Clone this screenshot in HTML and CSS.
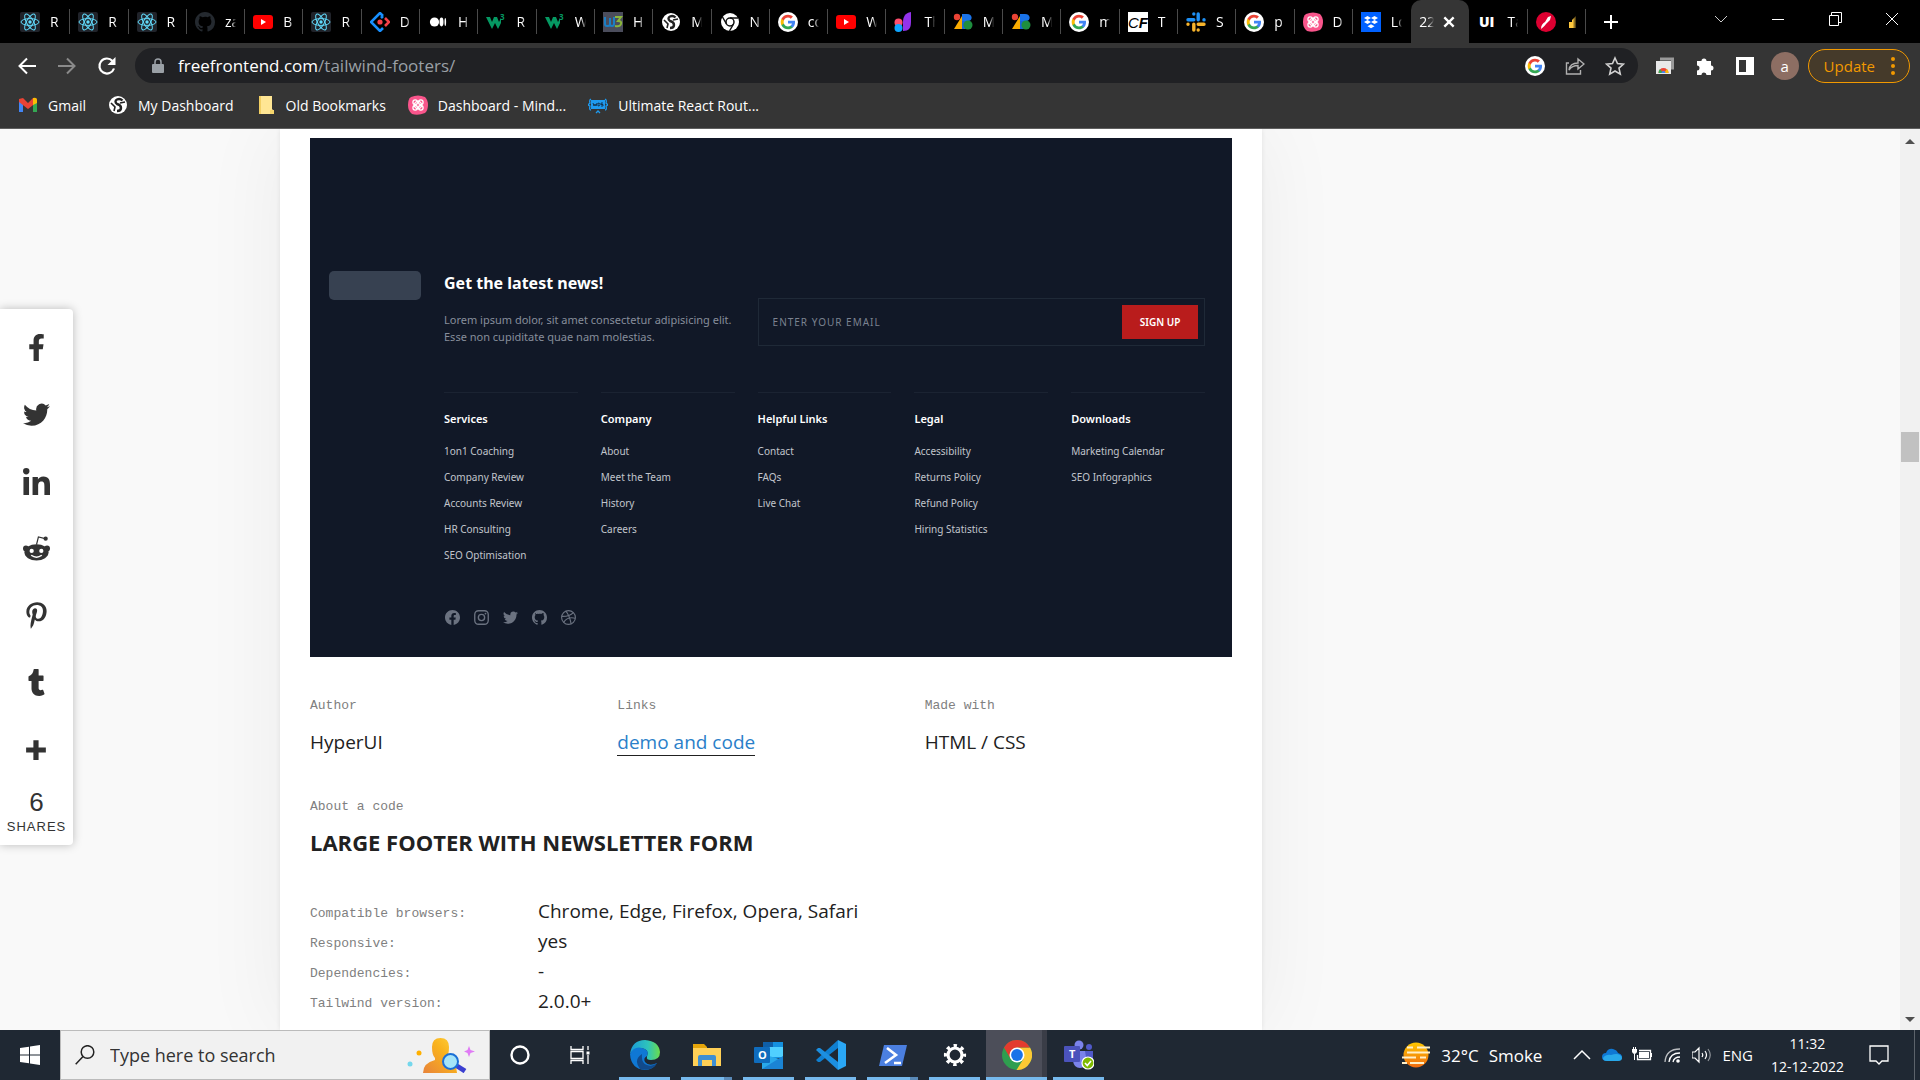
FILE: index.html
```html
<!DOCTYPE html>
<html lang="en">
<head>
<meta charset="utf-8">
<meta name="viewport" content="width=device-width, initial-scale=1">
<title>22 Tailwind Footers</title>
<link rel="stylesheet" href="styles.css">
</head>
<body>
<svg class="sprite" aria-hidden="true">
  <symbol id="react" viewBox="0 0 20 20"><rect width="20" height="20" rx="2" fill="#20232a"/><g fill="none" stroke="#61dafb" stroke-width="1"><ellipse cx="10" cy="10" rx="9" ry="3.4"/><ellipse cx="10" cy="10" rx="9" ry="3.4" transform="rotate(60 10 10)"/><ellipse cx="10" cy="10" rx="9" ry="3.4" transform="rotate(120 10 10)"/></g><circle cx="10" cy="10" r="1.7" fill="#61dafb"/></symbol>
  <symbol id="github" viewBox="2 2 20 20"><path fill="currentColor" d="M12 2C6.477 2 2 6.484 2 12.017c0 4.425 2.865 8.18 6.839 9.504.5.092.682-.217.682-.483 0-.237-.008-.868-.013-1.703-2.782.605-3.369-1.343-3.369-1.343-.454-1.158-1.11-1.466-1.11-1.466-.908-.62.069-.608.069-.608 1.003.07 1.531 1.032 1.531 1.032.892 1.53 2.341 1.088 2.91.832.092-.647.35-1.088.636-1.338-2.22-.253-4.555-1.113-4.555-4.951 0-1.093.39-1.988 1.029-2.688-.103-.253-.446-1.272.098-2.65 0 0 .84-.27 2.75 1.026A9.564 9.564 0 0112 6.844c.85.004 1.705.115 2.504.337 1.909-1.296 2.747-1.027 2.747-1.027.546 1.379.202 2.398.1 2.651.64.7 1.028 1.595 1.028 2.688 0 3.848-2.339 4.695-4.566 4.943.359.309.678.92.678 1.855 0 1.338-.012 2.419-.012 2.747 0 .268.18.58.688.482A10.019 10.019 0 0022 12.017C22 6.484 17.522 2 12 2z"/></symbol>
  <symbol id="youtube" viewBox="0 0 20 20"><rect y="3" width="20" height="14" rx="3" fill="#f00"/><path d="M8 7v6l5-3z" fill="#fff"/></symbol>
  <symbol id="antd" viewBox="0 0 20 20"><path d="M13 4l-3-3-9 9 9 9 3-3M13 4l-2 2" fill="none" stroke="#1890ff" stroke-width="2.6"/><path d="M15 6l4 4-4 4" fill="none" stroke="#f5414a" stroke-width="2.6"/><circle cx="10" cy="10" r="2.6" fill="#f5414a"/></symbol>
  <symbol id="medium" viewBox="0 0 20 20"><g fill="#fff"><circle cx="6.500" cy="10" r="4.600"/><ellipse cx="13.500" cy="10" rx="2" ry="4.400"/><ellipse cx="17.300" cy="10" rx=".8" ry="4"/></g></symbol>
  <symbol id="w3docs" viewBox="0 0 20 20"><rect width="20" height="20" fill="#4b4d5c"/><path d="M2 5v7q0 2 2 2h1q2 0 2-2V6v6q0 2 2 2h0q2 0 2-2V5" fill="none" stroke="#1c7fc4" stroke-width="2"/><path d="M12 5h6l-3 4q4 0 3 3t-6 2" fill="none" stroke="#8bb73b" stroke-width="2"/></symbol>
  <symbol id="globe" viewBox="0 0 20 20"><circle cx="10" cy="10" r="9" fill="#fff"/><path d="M14.500 5.500Q12 3 9 4.500T9 9q4 1 4 4t-4 3" fill="none" stroke="#222" stroke-width="2.400"/><path d="M3 8l4 4-1 4M12 8l5-1" fill="none" stroke="#222" stroke-width="1.600"/></symbol>
  <symbol id="chromemono" viewBox="0 0 20 20"><circle cx="10" cy="10" r="9" fill="#fff"/><circle cx="10" cy="10" r="4" fill="none" stroke="#111" stroke-width="1.500"/><path d="M10 6h8M6.500 12L2.500 5M13.500 12l-4 7" stroke="#111" stroke-width="1.500"/></symbol>
  <symbol id="google" viewBox="-3 -3 30 30"><circle cx="12" cy="12" r="15" fill="#fff"/><path fill="#4285f4" d="M22.560 12.250c0-.78-.07-1.530-.2-2.250H12v4.260h5.920c-.26 1.370-1.040 2.530-2.210 3.310v2.770h3.570c2.080-1.920 3.280-4.740 3.280-8.090z"/><path fill="#34a853" d="M12 23c2.970 0 5.460-.98 7.280-2.660l-3.570-2.770c-.98.66-2.230 1.060-3.710 1.060-2.860 0-5.290-1.930-6.160-4.530H2.180v2.840C3.990 20.530 7.700 23 12 23z"/><path fill="#fbbc05" d="M5.840 14.090c-.22-.66-.35-1.360-.35-2.090s.13-1.430.35-2.090V7.070H2.180C1.430 8.550 1 10.220 1 12s.43 3.450 1.180 4.930l3.660-2.840z"/><path fill="#ea4335" d="M12 5.380c1.620 0 3.060.56 4.210 1.640l3.150-3.150C17.450 2.090 14.970 1 12 1 7.700 1 3.990 3.470 2.180 7.070l3.660 2.840c.87-2.600 3.300-4.530 6.160-4.530z"/></symbol>
  <symbol id="themes" viewBox="0 0 20 20"><path d="M17 0c-6 1-8 5-8 10s0 6 0 9c6 0 8-3 8-9z" fill="#9333ea"/><circle cx="4.500" cy="10.500" r="4" fill="#ff4d6d"/><circle cx="4.500" cy="16" r="4" fill="#0ea5ff"/></symbol>
  <symbol id="bootstrap" viewBox="0 0 20 20"><circle cx="4" cy="5" r="3.200" fill="#ea4335"/><path d="M1 17L9 4v13z" fill="#f9ab00"/><path d="M9 2h5c6 0 6 7 1 7H9z" fill="#1a73e8"/><path d="M9 9h4v8H9z" fill="#1967d2"/><circle cx="15" cy="13" r="4.500" fill="#1e8e3e"/></symbol>
  <symbol id="slack" viewBox="0 0 20 20"><g fill="none" stroke-width="3.400" stroke-linecap="round"><path d="M7.800 2v.1M2 7.800h5.800M12.200 2v5.800M18 7.800v.1" stroke="#1e90f5"/><path d="M2 12.200v.1M7.800 12.200V18M12.200 12.200H18M12.200 18v.1" stroke="#f5b32c"/></g></symbol>
  <symbol id="mind" viewBox="0 0 20 20"><path d="M3 2Q10-1 17 2q3 3 3 8t-3 8q-7 3-13 1Q0 16 0 10T3 2z" fill="#f9558b"/><g fill="none" stroke="#fff" stroke-width="1.300"><circle cx="7.200" cy="7.200" r="2.300"/><circle cx="12.800" cy="7.200" r="2.300"/><circle cx="7.200" cy="12.800" r="2.300"/><circle cx="12.800" cy="12.800" r="2.300"/><circle cx="10" cy="10" r="3.600"/></g></symbol>
  <symbol id="dropbox" viewBox="0 0 20 20"><rect width="20" height="20" fill="#0061ff"/><path d="M6.500 4l3.500 2-3.500 2L3 6zM13.500 4L17 6l-3.500 2L10 6zM6.500 8l3.500 2-3.500 2L3 10zM13.500 8l3.500 2-3.500 2-3.500-2zM10 12.200l3.500 2-3.500 2-3.500-2z" fill="#fff"/></symbol>
  <symbol id="redbrush" viewBox="0 0 20 20"><circle cx="10" cy="10" r="10" fill="#dd0031"/><path d="M5 17c0-4 2-6 4-7l3-5 3-1-1 4-4 4c-1 2-3 3-5 5z" fill="#fff"/></symbol>
  <symbol id="gmail" viewBox="0 0 20 20"><path d="M1 17V4h4v13z" fill="#4285f4"/><path d="M15 17V4h4v13z" fill="#34a853"/><path d="M1 4l4-1 5 5 5-5 4 1v3l-9 7-9-7z" fill="#ea4335"/><path d="M15 3q4-1 4 2v3l-4 2z" fill="#fbbc04"/></symbol>
  <symbol id="folder" viewBox="0 0 20 20"><path d="M3 1h13v13l2 2v3H3z" fill="#ffe694"/><path d="M3 1h2v18H3z" fill="#f2cf63"/><path d="M14 15h4v4h-4z" fill="#f5d56c"/></symbol>
  <symbol id="wds" viewBox="0 0 20 20"><path d="M3 5h14v9H3z" fill="#1e9bf0"/><path d="M3 4q-2 1-1 4l-2 2 2 1q-1 4 1 4M17 4q2 1 1 4l2 2-2 1q1 4-1 4M8 18l2-2 2 2" fill="none" stroke="#1e9bf0" stroke-width="1.300"/><path d="M5 8l1 3 1-2 1 2 1-3M10 8v3q2 0 2-1.500T10 8M15 8h-2v1.500h2V11h-2" fill="none" stroke="#123" stroke-width=".8"/></symbol>
  <symbol id="twitter" viewBox="2 2 20 20"><path fill="currentColor" d="M8.290 20.251c7.547 0 11.675-6.253 11.675-11.675 0-.178 0-.355-.012-.53A8.348 8.348 0 0022 5.920a8.190 8.190 0 01-2.357.646 4.118 4.118 0 001.804-2.270 8.224 8.224 0 01-2.605.996 4.107 4.107 0 00-6.993 3.743 11.650 11.650 0 01-8.457-4.287 4.106 4.106 0 001.270 5.477A4.072 4.072 0 012.800 9.713v.052a4.105 4.105 0 003.292 4.022 4.095 4.095 0 01-1.853.07 4.108 4.108 0 003.834 2.850A8.233 8.233 0 012 18.407a11.616 11.616 0 006.290 1.840"/></symbol>
</svg>

<header class="browser">
  <div class="titlebar">
    <nav class="tabs" aria-label="Tabs">
      <a class="tab" href="#"><svg><use href="#react"/></svg><span>R</span></a>
      <a class="tab" href="#"><svg><use href="#react"/></svg><span>R</span></a>
      <a class="tab" href="#"><svg><use href="#react"/></svg><span>R</span></a>
      <a class="tab tab-dim" href="#"><svg><use href="#github"/></svg><span>za</span></a>
      <a class="tab" href="#"><svg><use href="#youtube"/></svg><span>B</span></a>
      <a class="tab" href="#"><svg><use href="#react"/></svg><span>R</span></a>
      <a class="tab" href="#"><svg><use href="#antd"/></svg><span>D</span></a>
      <a class="tab" href="#"><svg><use href="#medium"/></svg><span>H</span></a>
      <a class="tab" href="#"><svg viewBox="0 0 20 20"><path d="M0 5h4l2 5 2-5h3l2 5 2-4v5l-3 6-3-6-3 6z" fill="#059862"/><text x="14" y="8" font-size="8" font-weight="700" fill="#059862">3</text></svg><span>R</span></a>
      <a class="tab" href="#"><svg viewBox="0 0 20 20"><path d="M0 5h4l2 5 2-5h3l2 5 2-4v5l-3 6-3-6-3 6z" fill="#059862"/><text x="14" y="8" font-size="8" font-weight="700" fill="#059862">3</text></svg><span>W</span></a>
      <a class="tab" href="#"><svg><use href="#w3docs"/></svg><span>H</span></a>
      <a class="tab" href="#"><svg><use href="#globe"/></svg><span>M</span></a>
      <a class="tab" href="#"><svg><use href="#chromemono"/></svg><span>N</span></a>
      <a class="tab" href="#"><svg><use href="#google"/></svg><span>co</span></a>
      <a class="tab" href="#"><svg><use href="#youtube"/></svg><span>W</span></a>
      <a class="tab" href="#"><svg><use href="#themes"/></svg><span>Th</span></a>
      <a class="tab" href="#"><svg><use href="#bootstrap"/></svg><span>M</span></a>
      <a class="tab" href="#"><svg><use href="#bootstrap"/></svg><span>M</span></a>
      <a class="tab" href="#"><svg><use href="#google"/></svg><span>m</span></a>
      <a class="tab" href="#"><svg class="cf" viewBox="0 0 20 20"><rect width="20" height="20" fill="#fff"/><text x="0" y="16" font-size="15" font-style="italic">C<tspan font-weight="700">F</tspan></text></svg><span>T</span></a>
      <a class="tab" href="#"><svg><use href="#slack"/></svg><span>S</span></a>
      <a class="tab" href="#"><svg><use href="#google"/></svg><span>p</span></a>
      <a class="tab" href="#"><svg><use href="#mind"/></svg><span>D</span></a>
      <a class="tab tab-last" href="#"><svg><use href="#dropbox"/></svg><span>Lo</span></a>
      <div class="tab tab-active"><span>22</span><button aria-label="Close tab"><svg viewBox="0 0 12 12"><path d="M2 2l8 8M10 2l-8 8" stroke="#fff" stroke-width="2"/></svg></button></div>
      <a class="tab" href="#"><svg viewBox="0 0 20 20"><text x="2" y="15" font-size="14" font-weight="800" fill="#fff">UI</text></svg><span>Ta</span></a>
      <a class="tab" href="#"><svg><use href="#redbrush"/></svg><span><svg viewBox="0 0 10 20"><path d="M3 10h3V8l4-4v12H3z" fill="#ffc83d"/></svg></span></a>
    </nav>
    <button class="new-tab" aria-label="New tab"><svg viewBox="0 0 16 16"><path d="M8 1v14M1 8h14" stroke="#fff" stroke-width="2"/></svg></button>
    <div class="window-controls">
      <button aria-label="Search tabs"><svg viewBox="0 0 14 14"><path d="M1 4l6 6 6-6" fill="none" stroke="#ccc"/></svg></button>
      <button aria-label="Minimise"><svg viewBox="0 0 14 14"><path d="M1 7.500h12" stroke="#fff"/></svg></button>
      <button aria-label="Restore"><svg viewBox="0 0 14 14"><path d="M1.500 3.500h9v10h-9zM3.500 3V.5h10v10H11" fill="none" stroke="#fff"/></svg></button>
      <button aria-label="Close"><svg viewBox="0 0 14 14"><path d="M1 1l12 12M13 1L1 13" stroke="#fff"/></svg></button>
    </div>
  </div>

  <div class="toolbar">
    <button class="nav-btn" aria-label="Back"><svg viewBox="0 0 20 20"><path d="M19 10H3M10 2.500L2.500 10l7.500 7.500" fill="none" stroke="#fff" stroke-width="2"/></svg></button>
    <button class="nav-btn" aria-label="Forward"><svg viewBox="0 0 20 20"><path d="M1 10h16M10 2.500l7.500 7.500-7.500 7.500" fill="none" stroke="#8a8a8a" stroke-width="2"/></svg></button>
    <button class="nav-btn" aria-label="Reload"><svg viewBox="0 0 20 20"><path d="M17 12.500A7.500 7.500 0 1 1 15.500 5" fill="none" stroke="#fff" stroke-width="2.200"/><path d="M18.500 1v8h-8z" fill="#fff"/></svg></button>
    <div class="omnibox">
      <svg class="lock" viewBox="0 0 12 16"><rect x="0" y="6" width="12" height="9" rx="1" fill="#9aa0a6"/><path d="M3 7V4a3 3 0 0 1 6 0v3" fill="none" stroke="#9aa0a6" stroke-width="1.500"/></svg>
      <p class="url">freefrontend.com<span>/tailwind-footers/</span></p>
      <svg class="ico"><use href="#google"/></svg>
      <svg class="ico" viewBox="0 0 20 20"><path d="M4 7H1.500v11h14v-4M4 14q1-7 9-7V3l6 5-6 5V9.500Q7 9.500 4 14z" fill="none" stroke="#b0b0b0" stroke-width="1.400"/></svg>
      <svg class="ico" viewBox="0 0 20 20"><path d="M10 2l2.500 5.500 6 .6-4.500 4 1.300 6L10 15l-5.300 3.100 1.300-6-4.500-4 6-.6z" fill="none" stroke="#d0d0d0" stroke-width="1.600"/></svg>
    </div>
    <div class="extensions">
      <svg class="ico" viewBox="0 0 20 20"><path d="M5 1.500h14v12h-3V4.500H5z" fill="#9a9a9a"/><path d="M1 5h15v13H1z" fill="#e8e8e8"/><path d="M3.500 17a5 5 0 0 1 10 0z" fill="#ea4335"/><path d="M3.500 17q0-2.500 1.500-4l3 4z" fill="#34a853"/><path d="M13.500 17q0-2.500-1.500-4l-3 4z" fill="#fbbc05"/><path d="M6.500 17a2 2 0 0 1 4 0z" fill="#4285f4"/></svg>
      <svg class="ico" viewBox="0 0 20 20"><path d="M2 5h4.500a2.500 2.500 0 1 1 5 0H16v4.500a2.500 2.500 0 1 1 0 5V19h-4.500a2.500 2.500 0 0 0-5 0H2v-4.500a2.500 2.500 0 0 0 0-5z" fill="#fff"/></svg>
      <svg class="ico" viewBox="0 0 20 20"><path d="M1 1h18v18H1zM4 4v12h7V4z" fill="#fff" fill-rule="evenodd"/></svg>
      <button class="avatar" aria-label="Profile">a</button>
      <button class="update">Update <svg viewBox="0 0 4 18"><g fill="#f29900"><circle cx="2" cy="2" r="2"/><circle cx="2" cy="9" r="2"/><circle cx="2" cy="16" r="2"/></g></svg></button>
    </div>
  </div>

  <nav class="bookmarks" aria-label="Bookmarks">
    <a href="#"><svg><use href="#gmail"/></svg>Gmail</a>
    <a href="#"><svg><use href="#globe"/></svg>My Dashboard</a>
    <a href="#"><svg><use href="#folder"/></svg>Old Bookmarks</a>
    <a href="#"><svg><use href="#mind"/></svg>Dashboard - Mind...</a>
    <a href="#"><svg><use href="#wds"/></svg>Ultimate React Rout...</a>
  </nav>
</header>

<div class="viewport">
  <main class="page">
    <article class="card">
      <section class="preview">
        <div class="brand"></div>
        <div class="preview-body">
          <div class="news">
            <div class="news-copy">
              <h3>Get the latest news!</h3>
              <p>Lorem ipsum dolor, sit amet consectetur adipisicing elit. Esse non cupiditate quae nam molestias.</p>
            </div>
            <form class="signup">
              <input type="email" placeholder="ENTER YOUR EMAIL" aria-label="Email">
              <button type="button">SIGN UP</button>
            </form>
          </div>
          <div class="link-cols">
            <div><h4>Services</h4><a href="#">1on1 Coaching</a><a href="#">Company Review</a><a href="#">Accounts Review</a><a href="#">HR Consulting</a><a href="#">SEO Optimisation</a></div>
            <div><h4>Company</h4><a href="#">About</a><a href="#">Meet the Team</a><a href="#">History</a><a href="#">Careers</a></div>
            <div><h4>Helpful Links</h4><a href="#">Contact</a><a href="#">FAQs</a><a href="#">Live Chat</a></div>
            <div><h4>Legal</h4><a href="#">Accessibility</a><a href="#">Returns Policy</a><a href="#">Refund Policy</a><a href="#">Hiring Statistics</a></div>
            <div><h4>Downloads</h4><a href="#">Marketing Calendar</a><a href="#">SEO Infographics</a></div>
          </div>
          <div class="socials">
            <a href="#" aria-label="Facebook"><svg viewBox="2 2 20 20"><path fill="currentColor" d="M22 12c0-5.523-4.477-10-10-10S2 6.477 2 12c0 4.991 3.657 9.128 8.438 9.878v-6.987h-2.540V12h2.540V9.797c0-2.506 1.492-3.890 3.777-3.890 1.094 0 2.238.195 2.238.195v2.460h-1.260c-1.243 0-1.630.771-1.630 1.562V12h2.773l-.443 2.890h-2.330v6.988C18.343 21.128 22 16.991 22 12z"/></svg></a>
            <a href="#" aria-label="Instagram"><svg viewBox="2 2 20 20"><g fill="none" stroke="currentColor" stroke-width="1.800"><rect x="3" y="3" width="18" height="18" rx="5"/><circle cx="12" cy="12" r="4.200"/></g><circle cx="17.300" cy="6.700" r="1.200" fill="currentColor"/></svg></a>
            <a href="#" aria-label="Twitter"><svg><use href="#twitter"/></svg></a>
            <a href="#" aria-label="GitHub"><svg><use href="#github"/></svg></a>
            <a href="#" aria-label="Dribbble"><svg viewBox="2 2 20 20"><g fill="none" stroke="currentColor" stroke-width="1.500"><circle cx="12" cy="12" r="9.200"/><path d="M8.500 3.500q5 6 7 17M3 10.500q10 .5 15.500-5M5.500 18.500q5-8 15.500-5.500"/></g></svg></a>
          </div>
        </div>
      </section>

      <dl class="meta">
        <div><dt>Author</dt><dd>HyperUI</dd></div>
        <div><dt>Links</dt><dd><a href="#">demo and code</a></dd></div>
        <div><dt>Made with</dt><dd>HTML / CSS</dd></div>
      </dl>
      <p class="label">About a code</p>
      <h2>LARGE FOOTER WITH NEWSLETTER FORM</h2>
      <table class="specs">
        <tr><th scope="row">Compatible browsers:</th><td>Chrome, Edge, Firefox, Opera, Safari</td></tr>
        <tr><th scope="row">Responsive:</th><td>yes</td></tr>
        <tr><th scope="row">Dependencies:</th><td>-</td></tr>
        <tr><th scope="row">Tailwind version:</th><td>2.0.0+</td></tr>
      </table>
    </article>
  </main>

  <aside class="share">
    <a href="#" aria-label="Facebook"><svg viewBox="0 0 320 512"><path d="M279.140 288l14.220-92.660h-88.910v-60.130c0-25.350 12.420-50.060 52.240-50.060h40.420V6.260S260.430 0 225.360 0c-73.220 0-121.080 44.380-121.080 124.720v70.620H22.890V288h81.390v224h100.170V288z"/></svg></a>
    <a href="#" aria-label="Twitter"><svg><use href="#twitter"/></svg></a>
    <a href="#" aria-label="LinkedIn"><svg viewBox="0 0 448 448"><path d="M100.280 448H7.400V148.900h92.880zM53.790 108.100C24.090 108.100 0 83.500 0 53.800a53.790 53.790 0 01107.580 0c0 29.700-24.100 54.300-53.790 54.300zM447.900 448h-92.680V302.400c0-34.700-.7-79.200-48.290-79.200-48.290 0-55.690 37.700-55.690 76.700V448h-92.780V148.900h89.080v40.800h1.300c12.400-23.500 42.690-48.300 87.880-48.300 94 0 111.280 61.900 111.280 142.300V448z"/></svg></a>
    <a href="#" aria-label="Reddit"><svg viewBox="0 0 28 26"><path d="M14 9l2-8 8 2" fill="none" stroke="#333" stroke-width="1.300"/><circle cx="23.500" cy="2.800" r="2.200"/><circle cx="3" cy="13" r="3"/><circle cx="25" cy="13" r="3"/><ellipse cx="14" cy="17" rx="12.500" ry="8.500"/><circle cx="9" cy="15.500" r="2.200" fill="#fff"/><circle cx="19" cy="15.500" r="2.200" fill="#fff"/><path d="M8.500 20q5.500 4 11 0" fill="none" stroke="#fff" stroke-width="1.600"/></svg></a>
    <a href="#" aria-label="Pinterest"><svg viewBox="0 0 384 512"><path d="M204 6.500C101.400 6.500 0 74.900 0 185.600 0 256 39.600 296 63.600 296c9.900 0 15.600-27.600 15.600-35.400 0-9.300-23.700-29.100-23.700-67.800 0-80.400 61.200-137.400 140.400-137.400 68.100 0 118.500 38.700 118.500 109.800 0 53.100-21.300 152.700-90.300 152.700-24.900 0-46.200-18-46.200-43.800 0-37.800 26.400-74.400 26.400-113.400 0-66.200-93.900-54.200-93.900 25.800 0 16.800 2.100 35.400 9.600 50.700-13.800 59.400-42 147.900-42 209.100 0 18.900 2.700 37.500 4.500 56.400 3.400 3.800 1.700 3.400 6.900 1.500 50.400-69 48.600-82.500 71.400-172.800 12.300 23.400 44.100 36 69.300 36 106.200 0 153.900-103.500 153.900-196.800C384 71.300 298.200 6.500 204 6.500z"/></svg></a>
    <a href="#" aria-label="Tumblr"><svg viewBox="0 0 320 512"><path d="M309.800 480.300c-13.600 14.500-50 31.700-97.400 31.700-120.800 0-147-88.800-147-140.600v-144H17.900c-5.500 0-10-4.500-10-10v-68c0-7.200 4.500-13.600 11.300-16 62-21.800 81.500-76 84.300-117.100.8-11 6.500-16.300 16.100-16.300h70.900c5.500 0 10 4.500 10 10v115.200h83c5.500 0 10 4.400 10 9.900v81.700c0 5.500-4.500 10-10 10h-83.400V360c0 34.200 23.700 53.600 68 35.800 4.800-1.900 9-3.200 12.700-2.200 3.500.9 5.800 3.400 7.400 7.900l22 64.300c1.800 5 3.300 10.600-.4 14.500z"/></svg></a>
    <a href="#" aria-label="More"><svg viewBox="0 0 26 26"><path d="M10 4h5v7h7v5h-7v7h-5v-7H3v-5h7z"/></svg></a>
    <p class="share-count">6</p>
    <p class="share-label">SHARES</p>
  </aside>

  <div class="scrollbar" aria-hidden="true">
    <svg viewBox="0 0 10 6"><path d="M0 6l5-5 5 5z" fill="#505050"/></svg>
    <i></i>
    <svg viewBox="0 0 10 6"><path d="M0 0l5 5 5-5z" fill="#505050"/></svg>
  </div>
</div>

<footer class="taskbar">
  <button class="start" aria-label="Start"><svg viewBox="0 0 20 20"><path d="M0 3l9-1.300V9.500H0zM10 1.500L20 0v9.500H10zM0 10.500h9v7.800L0 17zM10 10.500h10V20l-10-1.500z" fill="#fff"/></svg></button>
  <label class="search">
    <svg class="glass" viewBox="0 0 20 20"><circle cx="12.500" cy="7" r="6.300" fill="none" stroke="#222" stroke-width="1.500"/><path d="M8 11.500L.7 19.300" stroke="#222" stroke-width="1.500"/></svg>
    <input type="text" placeholder="Type here to search">
    <svg class="person" viewBox="0 0 68 36">
      <defs><linearGradient id="pg" x1="0" x2="1" y1="1" y2="0"><stop offset="0" stop-color="#e8833a"/><stop offset=".6" stop-color="#f9b21d"/><stop offset="1" stop-color="#ffd23c"/></linearGradient></defs>
      <path d="M25 10q0-9 8.500-9T42 10q0 8-3 11v2q11 2 11 13H16q0-10 12-13v-2q-3-3-3-11z" fill="url(#pg)"/><path d="M50 29l8 5" stroke="#3b3fd0" stroke-width="5"/><circle cx="43.500" cy="24.500" r="7.500" fill="#a5e4f8" stroke="#1b6fd6" stroke-width="2"/><path d="M62 9l1.500 4 4.500 1.500-4.500 1.500-1.500 4-1.500-4-3.500-1.500 3.500-1.500z" fill="#e07bf5"/><circle cx="12" cy="16" r="2.500" fill="#ffb000"/><circle cx="3" cy="27" r="2.500" fill="#74d7ec"/>
    </svg>
  </label>
  <div class="task-tools">
    <button aria-label="Cortana"><svg viewBox="0 0 20 20"><circle cx="10" cy="10" r="8.500" fill="none" stroke="#fff" stroke-width="2.400"/></svg></button>
    <button aria-label="Task view"><svg viewBox="0 0 20 20"><path d="M1 1v3.500h12V1M1 19v-3.500h12V19M1 6.500h12v7H1zM18 1v4M18 10v9" fill="none" stroke="#fff" stroke-width="1.300"/><path d="M16.500 6.500h3v3h-3z" fill="#fff"/></svg></button>
  </div>
  <div class="apps">
    <button class="app" aria-label="Edge"><svg viewBox="0 0 30 30"><defs><linearGradient id="eg" x1="0" x2="1"><stop offset="0" stop-color="#1a9ad8"/><stop offset=".6" stop-color="#2ec4bb"/><stop offset="1" stop-color="#6bdc4b"/></linearGradient></defs><path d="M0 14Q2 0 15 0q14 1 15 12 0 8-9 8-5 0-4-3 3-8-6-9Q3 9 0 14z" fill="url(#eg)"/><path d="M0 14Q4 6 12 8q8 2 5 8-4 2-2 6 4 5 12 1-4 7-12 7Q1 29 0 14z" fill="#0f78d4"/><path d="M10 29Q3 20 12 14q-1 9 5 11 5 2 10-2-5 9-17 6z" fill="#114a8b"/></svg></button>
    <button class="app app-multi" aria-label="File Explorer"><svg viewBox="0 0 30 30"><path d="M1 4h11l3 3v5H1z" fill="#e5a50a"/><path d="M1 8h28v18H1z" fill="#ffd056"/><path d="M6 26V17q0-2 2-2h14q2 0 2 2v9h-4v-6H10v6z" fill="#3f8fd2"/></svg></button>
    <button class="app" aria-label="Outlook"><svg viewBox="0 0 30 30"><path d="M9 2h20v16H9z" fill="#1490df"/><path d="M15 7h14v10H15z" fill="#50d0ff"/><path d="M9 2h10v5H9z" fill="#0f5fa8"/><path d="M8 14l21 6v9H8z" fill="#28a8ea"/><path d="M8 29l21-13v13z" fill="#1a84d4"/><rect y="7" width="16" height="16" rx="1" fill="#0f6cbd"/><text x="4" y="19" font-size="11" font-weight="700" fill="#fff">O</text></svg></button>
    <button class="app" aria-label="Visual Studio Code"><svg viewBox="0 0 30 30"><path d="M2 22l-2-2L22 0v8L4 22z" fill="#0f7fd0"/><path d="M2 8l-2 2 22 20v-8L4 8z" fill="#1c8fe0"/><path d="M22 0l8 4v22l-8 4z" fill="#2aa7f5"/></svg></button>
    <button class="app app-multi" aria-label="PowerShell"><svg viewBox="0 0 30 30"><path d="M6 5h23l-5 21H1z" fill="#4b7fe0"/><path d="M9 8l9 7-11 8M16 23h7" fill="none" stroke="#fff" stroke-width="2.600"/></svg></button>
    <button class="app" aria-label="Settings"><svg viewBox="0 0 30 30"><circle cx="15" cy="15" r="7" fill="none" stroke="#fff" stroke-width="3.200"/><circle cx="15" cy="15" r="9.500" fill="none" stroke="#fff" stroke-width="3.200" stroke-dasharray="3.400 4.060" stroke-dashoffset="1.700"/></svg></button>
    <button class="app app-active" aria-label="Chrome"><svg viewBox="0 0 30 30"><circle cx="15" cy="15" r="15" fill="#2f9e4f"/><path d="M15 7.500h13A15 15 0 0 1 14.500 30L21.500 18.800z" fill="#fcc934"/><path d="M2 7.500A15 15 0 0 1 28 7.500H15L8.500 18.800z" fill="#e33b2e"/><circle cx="15" cy="15" r="7.500" fill="#fff"/><circle cx="15" cy="15" r="5.900" fill="#1a73e8"/></svg></button>
    <button class="app" aria-label="Teams"><svg viewBox="0 0 30 30"><circle cx="15" cy="5" r="4.500" fill="#7b83eb"/><circle cx="25" cy="7" r="3" fill="#5059c9"/><path d="M9 11h14v10q-1 7-7 7t-7-7z" fill="#7b83eb"/><path d="M21 11h8v8q-1 5-6 4z" fill="#5059c9"/><rect y="6" width="16" height="16" rx="1" fill="#4b53bc"/><text x="5" y="18" font-size="11" font-weight="700" fill="#fff">T</text><circle cx="24" cy="23" r="6" fill="#7fba00" stroke="#fff" stroke-width="1.200"/><path d="M21 23l2.300 2.500L27 21" fill="none" stroke="#fff" stroke-width="1.600"/></svg></button>
  </div>
  <div class="tray">
    <button class="weather"><svg viewBox="0 0 30 26"><defs><linearGradient id="sg" x2="0" y2="1"><stop offset="0" stop-color="#ffc800"/><stop offset="1" stop-color="#f06a10"/></linearGradient></defs><circle cx="15" cy="13" r="12.500" fill="url(#sg)"/><path d="M6 5.500h6M16 5.500h13M6 10.500h23M1 15.500h14M19 15.500h6M1 21h5M9 21h14" stroke="#fff0c8" stroke-width="2"/></svg><span>32°C</span><span>Smoke</span></button>
    <div class="tray-icons">
      <svg viewBox="0 0 20 20"><path d="M2 14l8-8 8 8" fill="none" stroke="#fff" stroke-width="1.500"/></svg>
      <svg viewBox="0 0 20 20"><path d="M5 16q-5 0-5-4t4-4q2-5 7-4 4 1 5 4 4 1 4 4t-4 4z" fill="#0f78d4"/><path d="M5 16q-4 0-4-3 3-4 8-3 6-2 9 0 2 1 2 3 0 3-4 3z" fill="#28a8ea"/></svg>
      <svg viewBox="0 0 20 20"><path d="M7 5.500h11.500v9H5.500V10" fill="none" stroke="#fff" stroke-width="1.300"/><path d="M7 7h10v6H7zM19 8h1v4h-1zM0 4h5v3q-1 2-2.500 2T0 7zM1 2h1v2H1zM3 2h1v2H3zM2 9h1v6H2z" fill="#fff"/></svg>
      <svg viewBox="0 0 20 20"><g fill="none" stroke="#fff" stroke-width="1.300"><path d="M3 17Q4 4 18 4" opacity=".7"/><path d="M7 17q1-9 11-9M11 17q1-5 7-5"/></g><circle cx="16" cy="16" r="1.800" fill="#fff"/></svg>
      <svg viewBox="0 0 20 20"><g fill="none" stroke="#fff" stroke-width="1.200"><path d="M0 7h3l4-4v14l-4-4H0zM10 8q1.500 2 0 4M13 6q3 4 0 8"/><path d="M16 4q4.500 6 0 12" opacity=".5"/></g></svg>
      <span>ENG</span>
    </div>
    <p class="clock"><span>11:32</span><span>12-12-2022</span></p>
    <button class="notify" aria-label="Notifications"><svg viewBox="0 0 20 20"><path d="M1 1h18v15h-6l-3 3-3-3H1z" fill="none" stroke="#fff" stroke-width="1.300"/></svg></button>
  </div>
</footer>
</body>
</html>
```
FILE: styles.css
```css
* { box-sizing: border-box; }

body {
  margin: 0;
  height: 100vh;
  display: flex;
  flex-direction: column;
  overflow: hidden;
  font-family: "Open Sans", "Noto Sans", sans-serif;
  background: #f9f9f9;
}

a { color: inherit; text-decoration: none; }
p, h2, h3, h4, dl, dd { margin: 0; }
button {
  border: 0;
  padding: 0;
  background: none;
  color: inherit;
  font: inherit;
  display: flex;
  align-items: center;
  justify-content: center;
}
svg { display: block; flex: none; }
svg text { font-family: "Open Sans", sans-serif; }
.sprite { position: absolute; width: 0; height: 0; }

/* Browser chrome */
.browser { background: #353535; color: #fff; border-bottom: 1px solid #5f5f5f; }
.titlebar { display: flex; height: 43px; background: #000; padding-left: 12px; }
.tabs { display: flex; flex: 0 1 1574px; min-width: 0; }
.tab {
  flex: 1 1 0;
  min-width: 0;
  display: flex;
  align-items: center;
  gap: 10px;
  padding-left: 8px;
  font-size: 14px;
  background: linear-gradient(#4a4a4a, #4a4a4a) right 9px / 1px 25px no-repeat;
}
.tab > svg { width: 20px; height: 20px; }
.tab > span {
  width: 11px;
  overflow: hidden;
  white-space: nowrap;
  -webkit-mask-image: linear-gradient(to right, #000 60%, transparent);
  mask-image: linear-gradient(to right, #000 60%, transparent);
}
.tab span svg { width: 10px; height: 20px; }
.tab .cf text { font-family: "Liberation Sans", sans-serif; }
.tab-dim svg { color: #24292f; }
.tab-last { background: none; }
.tab-active {
  background: #353535;
  border-radius: 10px 10px 0 0;
  gap: 8px;
}
.tab-active > span { width: 15px; }
.tab-active button svg { width: 14px; height: 14px; }
.new-tab { width: 50px; }
.new-tab svg { width: 16px; height: 16px; }
.window-controls { display: flex; margin-left: auto; height: 38px; }
.window-controls button { width: 57px; }
.window-controls svg { width: 14px; height: 14px; }

.toolbar { display: flex; align-items: center; padding: 5px 10px 5px 7px; }
.nav-btn { width: 40px; height: 30px; }
.nav-btn svg { width: 20px; height: 20px; }
.omnibox {
  flex: 1;
  display: flex;
  align-items: center;
  gap: 20px;
  height: 35px;
  margin-left: 8px;
  padding: 0 13px 0 17px;
  border-radius: 18px;
  background: #202124;
}
.lock { width: 12px; height: 16px; }
.ico { width: 20px; height: 20px; }
.url { flex: 1; font-size: 17px; margin-left: -6px; }
.url span { color: #9aa0a6; }
.extensions { display: flex; align-items: center; gap: 20px; padding-left: 17px; }
.avatar { width: 28px; height: 28px; margin-left: -4px; border-radius: 50%; background: #8d6e63; font-size: 15px; }
.update {
  height: 34px;
  margin-left: -11px;
  padding: 0 14px 0 15px;
  gap: 16px;
  border: 1px solid #f29900;
  border-radius: 17px;
  background: #453a2a;
  color: #f29900;
  font-size: 15px;
}
.update svg { width: 4px; height: 18px; }

.bookmarks { display: flex; gap: 22px; padding: 0 18px 6px; height: 40px; align-items: center; font-size: 14px; }
.bookmarks a { display: flex; align-items: center; gap: 10px; }
.bookmarks svg { width: 20px; height: 20px; }

/* Page */
.viewport { flex: 1; min-height: 0; display: flex; position: relative; }
.page { flex: 1; min-width: 0; overflow: hidden; padding-left: 280px; background: #f9f9f9; }
.card {
  max-width: 982px;
  min-height: 100%;
  padding: 9px 30px 12px;
  background: #fff;
  box-shadow: 0 0 5px rgba(0, 0, 0, .08), 0 0 80px rgba(0, 0, 0, .06);
  color: #212121;
}
.preview {
  display: grid;
  grid-template-columns: 92px 1fr;
  gap: 23px;
  padding: 133px 27px 32px 19px;
  background: #111827;
  color: #fff;
  font-family: "Noto Sans", sans-serif;
}
.brand { height: 29px; border-radius: 5px; background: #374151; }
.news, .link-cols { display: grid; grid-template-columns: repeat(5, 1fr); column-gap: 23px; }
.news-copy { grid-column: span 2; }
.news h3 { font-size: 16px; line-height: 24px; font-weight: 700; }
.news p { margin: 16px 0 1px; font-size: 11px; line-height: 17px; color: #878e9b; }
.signup {
  grid-column: span 3;
  align-self: end;
  display: flex;
  height: 48px;
  padding: 6px;
  border: 1px solid #1f2937;
}
.signup input {
  flex: 1;
  min-width: 0;
  padding: 0 8px;
  border: 0;
  background: none;
  font: 10px "Noto Sans", sans-serif;
  letter-spacing: 1px;
}
.signup input::placeholder { color: #7b8290; }
.signup button { width: 76px; background: #b91c1c; font-size: 10px; font-weight: 600; }
.link-cols { margin-top: 46px; }
.link-cols div { display: flex; flex-direction: column; align-items: flex-start; gap: 10px; padding-top: 17px; border-top: 1px solid #1b2332; }
.link-cols h4 { margin-bottom: 6px; font-size: 11px; line-height: 17px; font-weight: 600; }
.link-cols a { font-size: 10px; line-height: 16px; color: #c1c5cc; }
.socials { display: flex; gap: 14px; margin-top: 47px; padding-left: 1px; color: #6b7280; }
.socials svg { width: 15px; height: 15px; }

.meta { display: grid; grid-template-columns: repeat(3, 1fr); padding-top: 39px; }
.meta dt, .label, .specs th {
  font: 400 13px/20px "Liberation Mono", monospace;
  color: #808080;
}
.meta dd { margin-top: 12px; font-size: 19px; line-height: 28px; }
.meta dd a { color: #2a80c9; border-bottom: 1px solid #212121; }
.label { margin-top: 41px; }
.card h2 { margin-top: 10px; font-size: 22px; line-height: 30px; font-weight: 700; }
.specs { margin-top: 39px; border-collapse: collapse; }
.specs th { width: 228px; padding: 8px 0 2px; text-align: left; }
.specs td { padding: 0; font-size: 19px; line-height: 28px; }

.share {
  position: absolute;
  left: 0;
  top: 180px;
  width: 73px;
  padding: 5px 0 12px;
  border-radius: 0 4px 4px 0;
  background: #fff;
  box-shadow: 0 0 10px rgba(0, 0, 0, .25);
  text-align: center;
  font-family: "Liberation Sans", sans-serif;
  color: #333;
}
.share a { display: flex; height: 67px; align-items: center; justify-content: center; }
.share svg { width: 27px; height: 27px; fill: #333; color: #333; }
.share-count { font-size: 26px; line-height: 38px; }
.share-label { font-size: 13px; line-height: 12px; letter-spacing: 1px; }

.scrollbar { display: flex; flex-direction: column; align-items: center; width: 20px; padding: 9px 0 7px; background: #f1f1f1; }
.scrollbar svg { width: 10px; height: 6px; }
.scrollbar i { width: 18px; height: 30px; background: #c1c1c1; margin: 288px 0 auto; }

/* Taskbar */
.taskbar { display: flex; height: 50px; background: #1f2833; color: #fff; }
.start { width: 60px; }
.start svg, .glass { width: 20px; height: 20px; }
.search { display: flex; align-items: center; gap: 15px; width: 430px; padding: 0 14px; border: 1px solid #bbb; background: #f1f1f1; }
.search input { flex: 1; min-width: 0; padding: 0; border: 0; background: none; font: 18px "Open Sans", sans-serif; }
.search input::placeholder { color: #333; }
.person { width: 68px; height: 36px; }
.task-tools { display: flex; }
.task-tools button { width: 60px; }
.task-tools svg { width: 20px; height: 20px; }
.apps { display: flex; gap: 11px; padding-left: 9px; }
.app { width: 51px; border-bottom: 3px solid #76b9ed; padding-top: 3px; }
.app svg { width: 30px; height: 30px; }
.app-multi { border-image: linear-gradient(to right, #76b9ed 80%, #5a8ab8 80%) 3; }
.app-active { width: 61px; margin: 0 -5px; background: linear-gradient(to right, #4c4e59 92%, #3a3d47 92%); }
.tray { display: flex; align-items: center; margin-left: auto; font-size: 17px; }
.weather { gap: 10px; margin-right: 30px; }
.weather svg { width: 30px; height: 26px; }
.tray-icons { display: flex; align-items: center; gap: 10px; font-size: 15px; }
.tray-icons svg { width: 20px; height: 20px; }
.clock { display: flex; flex-direction: column; align-items: center; margin-left: 18px; font-size: 14px; line-height: 23px; }
.notify { height: 50px; width: 71px; border-right: 1px solid #5c636b; margin-right: 5px; }
.notify svg { width: 20px; height: 20px; }
```
